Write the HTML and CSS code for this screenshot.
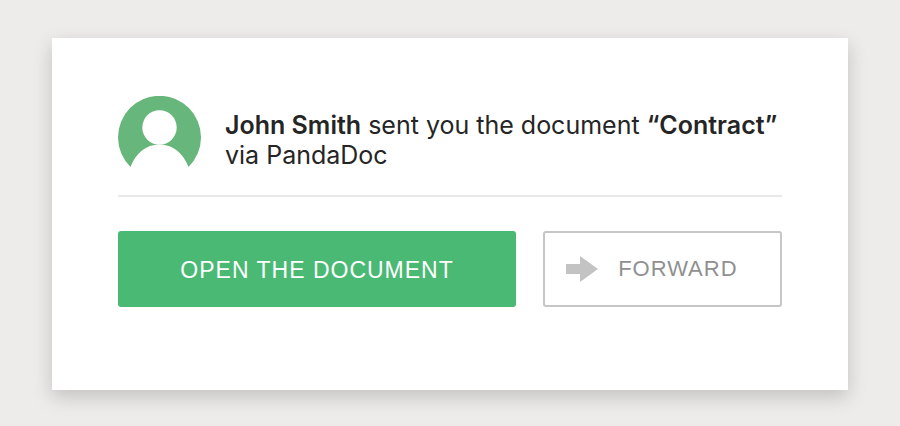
FILE: index.html
```html
<!doctype html>
<html lang="en">
<head>
    <meta charset="UTF-8">
    <meta name="viewport" content="width=device-width, initial-scale=1.0">
    <title>PandaDoc</title>
    <link rel="stylesheet" href="styles.css">
</head>
<body>
<main class="card">
    <div class="message">
        <svg class="avatar" viewBox="0 0 83 71" aria-hidden="true">
            <path fill="#67b67b" d="M12.500 71A41.500 41.500 0 1 1 70.500 71C65 57 55 48.500 41.500 48.500S18 57 12.500 71Z"/>
            <circle cx="41.500" cy="31.500" r="17.200" fill="#fff"/>
        </svg>
        <p class="message_text"><b>John Smith</b> sent you the document <b>“Contract”</b> via PandaDoc</p>
    </div>
    <div class="actions">
        <button class="button open" type="button">OPEN THE DOCUMENT</button>
        <button class="button forward" type="button">
            <svg class="arrow" viewBox="0 0 32 26" aria-hidden="true">
                <path fill="#c3c3c3" d="M0 8H14V0L32 13L14 26V18H0Z"/>
            </svg>
            FORWARD
        </button>
    </div>
</main>
</body>
</html>
```

FILE: styles.css
```css
* {
    box-sizing: border-box;
}

body {
    margin: 0;
    padding: 38px 52px 36px;
    background-color: #edecea;
    font-family: Inter, "Liberation Sans", sans-serif;
    color: #252525;
}

.card {
    padding: 58px 66px 83px;
    background-color: #fff;
    box-shadow: 0 7px 18px rgba(0, 0, 0, 0.18);
}

.message {
    display: flex;
    align-items: flex-start;
    gap: 24px;
    padding-bottom: 25px;
    border-bottom: 2px solid #e8e8e8;
}

.avatar {
    flex: none;
    width: 83px;
    height: 71px;
}

.message_text {
    margin: 0;
    padding-top: 14px;
    font-size: 25px;
    font-weight: 400;
    line-height: 30px;
}

.message_text b {
    font-weight: 600;
}

.actions {
    display: grid;
    grid-template-columns: 5fr 3fr;
    gap: 27px;
    padding-top: 34px;
}

.button {
    height: 76px;
    padding: 2px 0 0;
    border: none;
    border-radius: 3px;
    font-family: "Liberation Sans", Arial, sans-serif;
    font-size: 22px;
    letter-spacing: 1px;
    cursor: pointer;
}

.open {
    background-color: #49b974;
    color: #fff;
    font-size: 23px;
}

.forward {
    display: flex;
    align-items: center;
    gap: 20px;
    padding: 0 21px;
    border: 2px solid #c6c6c6;
    background-color: #fff;
    color: #909090;
}

.arrow {
    width: 32px;
    height: 26px;
}
```
